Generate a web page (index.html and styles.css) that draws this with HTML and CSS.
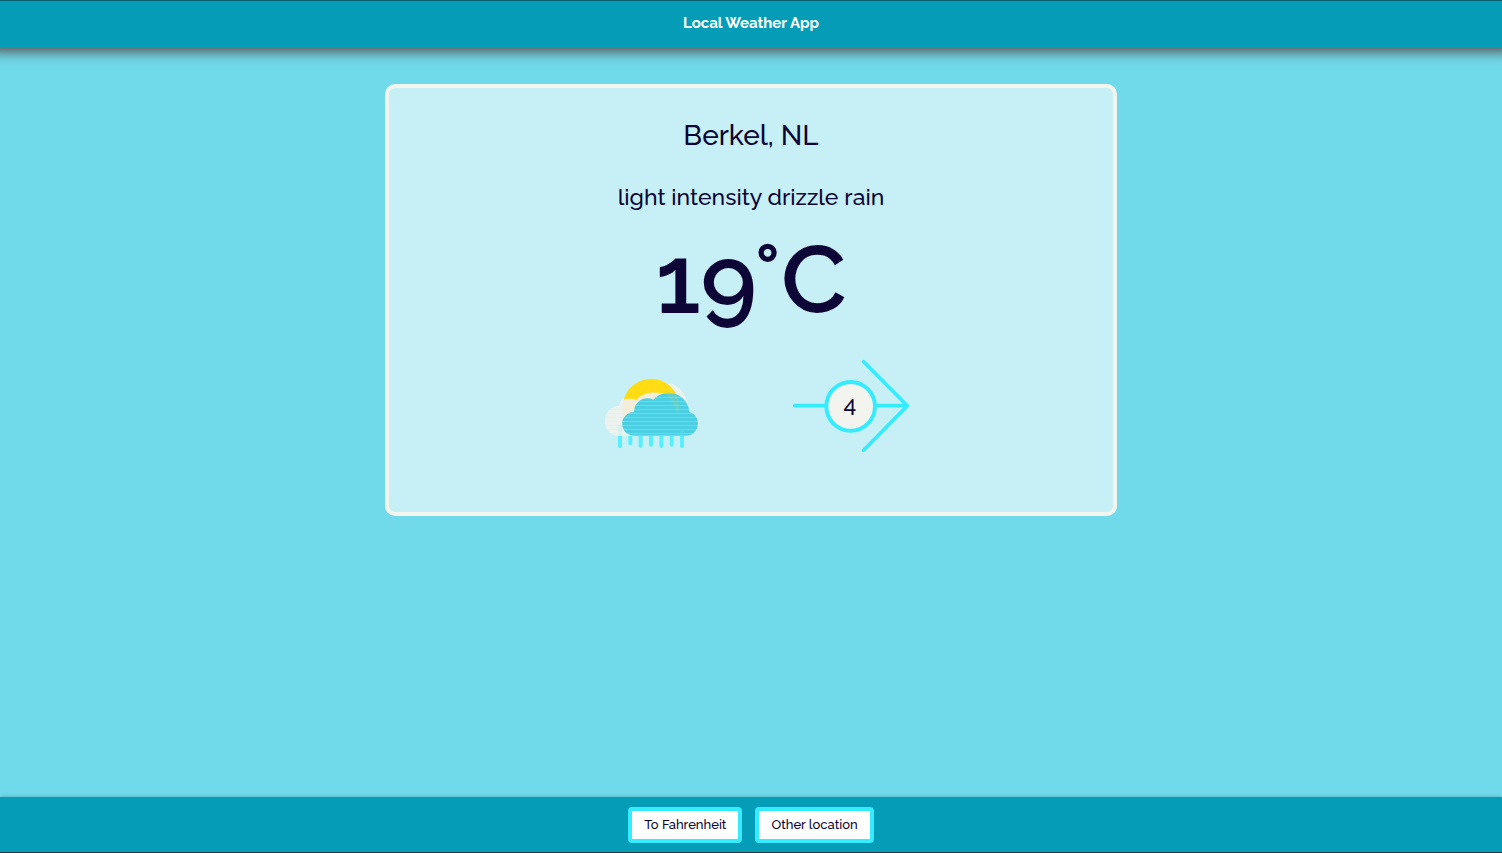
FILE: index.html
```html
<!DOCTYPE html>
<html lang="en">
<head>
<meta charset="utf-8">
<meta name="viewport" content="width=device-width, initial-scale=1">
<title>Local Weather App</title>
<link rel="stylesheet" href="styles.css">
</head>
<body>
<header class="topbar"><h1 class="title">Local Weather App</h1></header>
<main class="content">
  <section class="card">
    <h2 class="location">Berkel, NL</h2>
    <p class="description">light intensity drizzle rain</p>
    <p class="temperature">19°C</p>
    <div class="details">
      <svg class="weather" viewBox="0 0 375 285" role="img" aria-label="Drizzle rain">
        <defs>
          <pattern id="lines" width="375" height="12" patternUnits="userSpaceOnUse">
            <rect width="375" height="3" fill="#c7f0f6" opacity=".28"/>
          </pattern>
        </defs>
        <path d="M170 212H85C60 212 45 192 45 167C45 142 62 124 87 122Q90 106 103 98L243 55C275 68 294 95 297 141C316 146 327 160 327 175C325 199 305 212 285 212Z" fill="#f2f3ed" opacity=".85"/>
        <path d="M101 105A85 85 0 0 1 261 92L236 84L185 84L139 105Z" fill="#ffdc14"/>
        <path d="M98 167V105Q120 97 139 105C158 81 205 75 223 93L200 212H130Z" fill="#f4edda"/>
        <path d="M132 212A35 35 0 0 1 132 141A40 40 0 0 1 190 104A62 62 0 0 1 298 141C315 146 324 160 324 176C323 198 306 212 288 212Z" fill="#4ccfe2"/>
        <path d="M229 84Q246 83 260 91Q273 119 262 151Q254 112 229 90Z" fill="#65cfcb"/>
        <path d="M170 212H85C60 212 45 192 45 167C45 142 62 124 87 122L132 141A40 40 0 0 1 190 104A62 62 0 0 1 298 141C315 146 324 160 324 176C323 198 306 212 288 212Z" fill="url(#lines)"/>
        <path d="M84 213H96V244Q96 249 90 249T84 244ZM115 213H127V237Q127 241 121 241T115 237ZM146 213H158V244Q158 249 152 249T146 244ZM177 213H189V240Q189 245 183 245T177 240ZM208 213H220V244Q220 249 214 249T208 244ZM239 213H251V240Q251 245 245 245T239 240ZM270 213H282V244Q282 249 276 249T270 244Z" fill="#55efff"/>
        <path d="M270 195H282V213H270ZM84 180H96V213H84Z" fill="#55efff" opacity=".15"/>
      </svg>
      <div class="wind">
        <svg class="arrow" viewBox="0 0 420 330" aria-hidden="true">
          <path d="M44 164H382M251 32L382 164L251 298" fill="none" stroke="#37ebff" stroke-width="11" stroke-linecap="round" stroke-linejoin="round"/>
          <circle cx="212" cy="166" r="73" fill="#f3f4ee" stroke="#37ebff" stroke-width="12"/>
        </svg>
        <span class="speed">4</span>
      </div>
    </div>
  </section>
</main>
<footer class="actions">
  <button class="button" type="button">To Fahrenheit</button>
  <button class="button" type="button">Other location</button>
</footer>
</body>
</html>
```
FILE: styles.css
```css
* { box-sizing: border-box; }
body {
  margin: 0;
  min-height: 100vh;
  display: flex;
  flex-direction: column;
  background: #70daea;
  color: #0c0536;
  font-family: Raleway, Lato, sans-serif;
  font-weight: 500;
}
.topbar {
  height: 48px;
  background: #049cb6;
  border-top: 1px solid #075f70;
  box-shadow: 0 -6px 12px 10px #555;
  text-align: center;
}
.title {
  margin: 0;
  color: #fff;
  font-size: 15px;
  line-height: 44px;
  font-weight: 700;
}
.content {
  flex: 1;
  padding: 36px 16px;
}
.card {
  max-width: 732px;
  margin: 0 auto;
  padding: 28px 16px 44px;
  border: 4px solid #f3f4ee;
  border-radius: 10px;
  background: #c7f0f6;
  text-align: center;
}
.location {
  margin: 0;
  font-size: 28px;
  line-height: 40px;
  font-weight: 500;
}
.description {
  margin: 25px 0 0;
  font-size: 23px;
  line-height: 32px;
}
.temperature {
  margin: 6px 0 0;
  font-size: 96px;
  line-height: 120px;
  font-weight: 600;
}
.details {
  display: flex;
  justify-content: center;
  align-items: center;
  gap: 65px;
  height: 129px;
  padding: 4px 0 0 8px;
}
.weather {
  width: 125px;
  height: 95px;
  margin-top: 14px;
}
.wind {
  display: grid;
  place-items: center;
  width: 140px;
}
.arrow, .speed { grid-area: 1 / 1; }
.arrow {
  width: 140px;
  height: 110px;
}
.speed {
  margin-bottom: 4px;
  font-size: 23px;
  line-height: 28px;
}
.actions {
  display: flex;
  justify-content: center;
  align-items: center;
  gap: 13px;
  height: 56px;
  background: #049cb6;
  border-bottom: 1px solid #333;
  box-shadow: 0 0 4px #5ba8b4;
}
.button {
  height: 36px;
  padding: 0 12px;
  border: 4px solid #37ebff;
  border-radius: 4px;
  background: #fff;
  color: #0c0536;
  font: inherit;
  font-size: 13px;
}
```
